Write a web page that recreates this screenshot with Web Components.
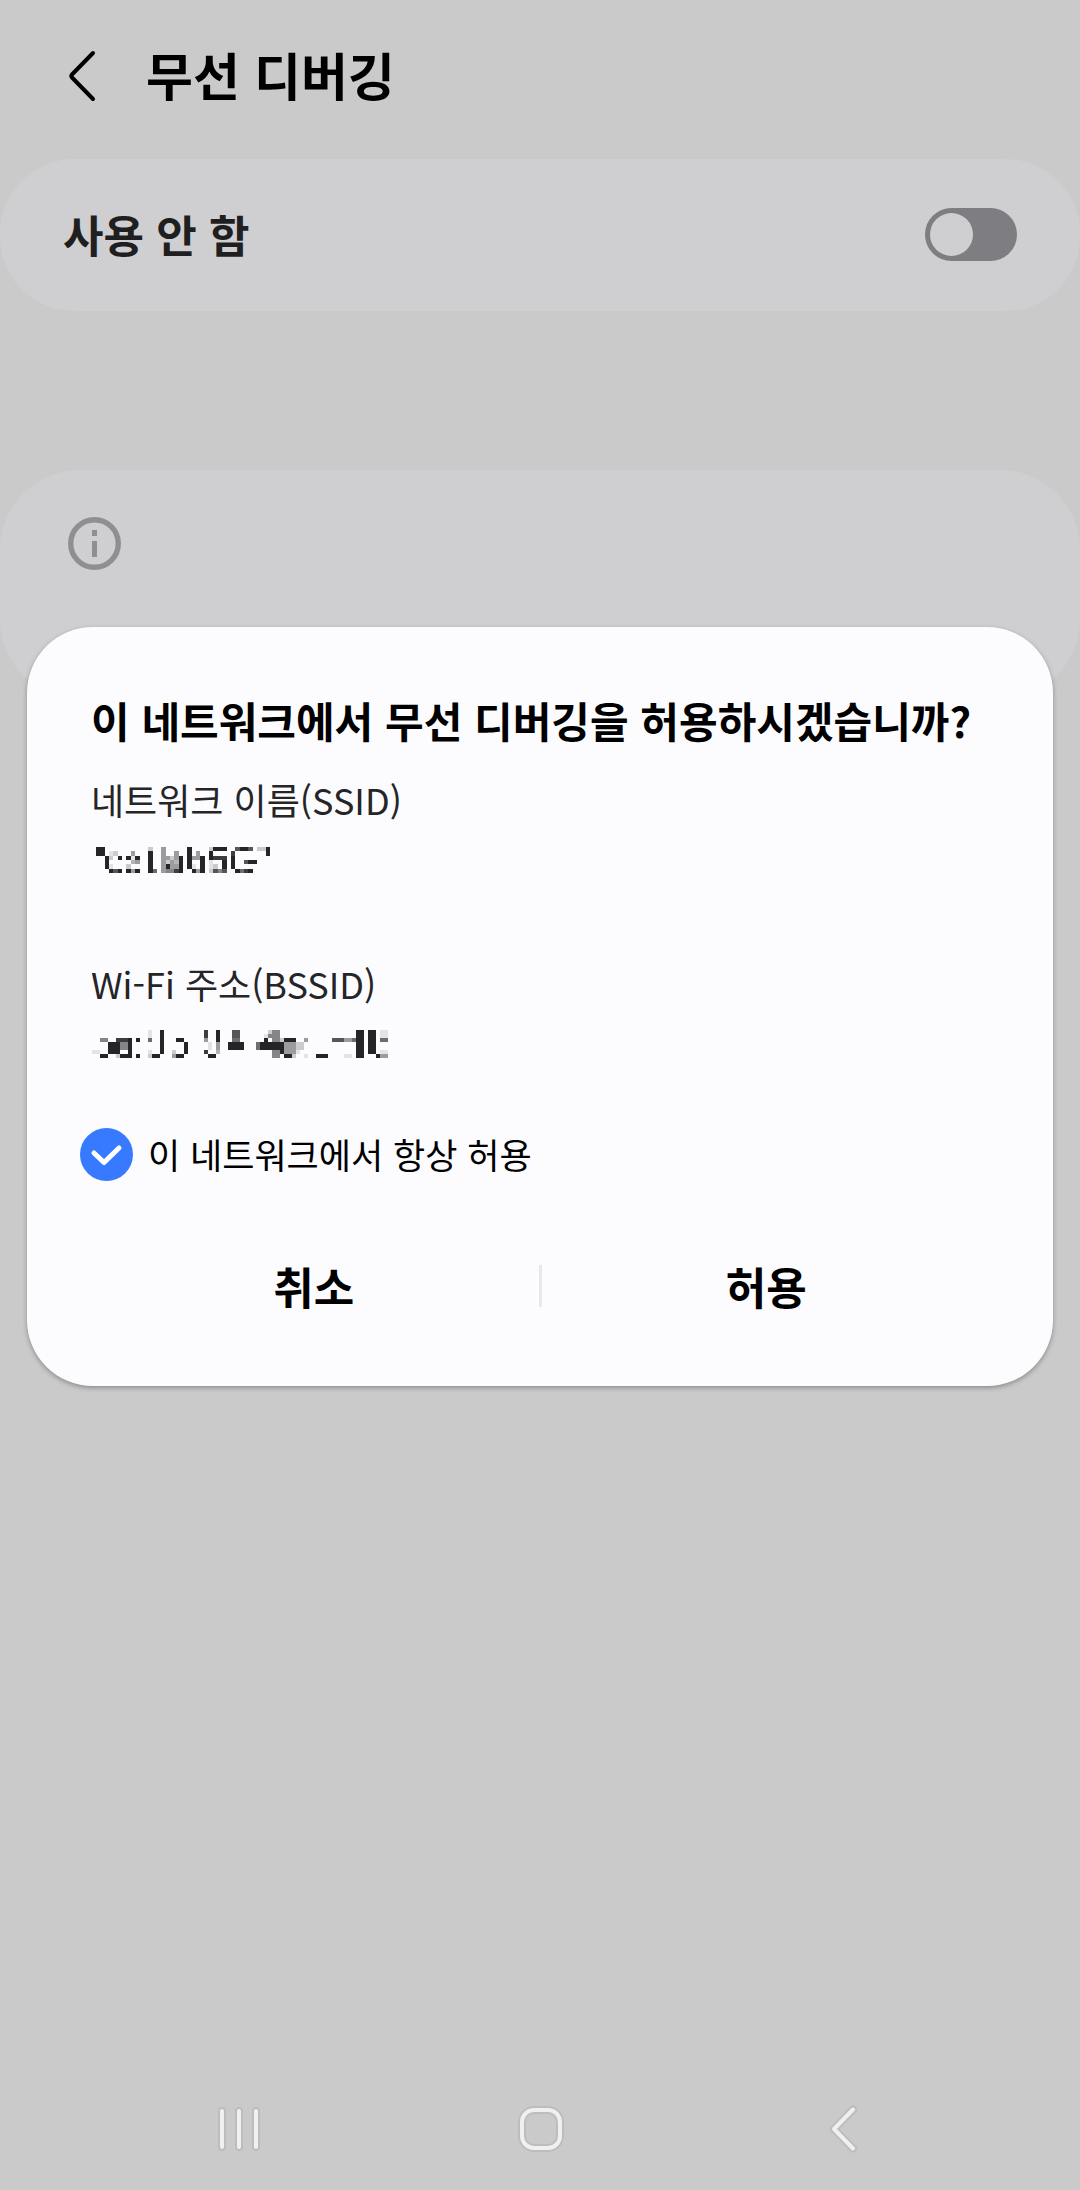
<!DOCTYPE html>
<html lang="ko">
<head>
<meta charset="utf-8">
<meta name="viewport" content="width=device-width, initial-scale=1">
<title>무선 디버깅</title>
<style>
  html, body { margin: 0; }
  body {
    background: #cacaca;
    color: #000;
    font-family: "Noto Sans CJK KR", "Noto Sans", sans-serif;
  }
</style>
</head>
<body>
<settings-screen>
  <app-bar slot="bar">무선 디버깅</app-bar>
  <switch-card>사용 안 함</switch-card>
  <info-card></info-card>
  <confirm-dialog slot="dialog">
    <span slot="title">이 네트워크에서 무선 디버깅을 허용하시겠습니까?</span>
    <info-field>네트워크 이름(SSID)<pixel-mask slot="value" name="ssid"></pixel-mask></info-field>
    <info-field>Wi-Fi 주소(BSSID)<pixel-mask slot="value" name="bssid"></pixel-mask></info-field>
    <check-option slot="option">이 네트워크에서 항상 허용</check-option>
    <span slot="cancel">취소</span>
    <span slot="accept">허용</span>
  </confirm-dialog>
  <nav-bar slot="nav"></nav-bar>
</settings-screen>

<script>
const define = (name, html, setup) => {
  const template = document.createElement('template');
  template.innerHTML = html;
  customElements.define(name, class extends HTMLElement {
    constructor() {
      super();
      this.attachShadow({ mode: 'open' }).append(template.content.cloneNode(true));
    }
    connectedCallback() { if (setup) setup(this, this.shadowRoot); }
  });
};

define('settings-screen', `
<style>
  :host { display: flex; flex-direction: column; min-height: 100vh; position: relative; }
  main { display: flex; flex-direction: column; gap: 159px; flex: 1; }
  .layer { position: absolute; inset: 0; padding: 627px 27px 0; }
</style>
<slot name="bar"></slot>
<main><slot></slot></main>
<slot name="nav"></slot>
<div class="layer"><slot name="dialog"></slot></div>`);

define('app-bar', `
<style>
  :host { display: flex; align-items: center; height: 159px; padding: 0 64px 8px; box-sizing: border-box; }
  button { all: unset; display: flex; width: 82px; height: 64px; align-items: center; }
  h1 { margin: 0; padding-bottom: 4px; font-size: 51px; line-height: 72px; font-weight: 700; }
</style>
<button aria-label="뒤로"><svg width="36" height="56" viewBox="0 0 36 56" fill="none" stroke="#000" stroke-width="4" stroke-linecap="round" stroke-linejoin="round"><path d="M29 5 8 26.500Q6.500 28 8 29.500L29 51"/></svg></button>
<h1><slot></slot></h1>`);

define('switch-card', `
<style>
  :host { display: block; }
  label { display: flex; align-items: center; justify-content: space-between; height: 152px; padding: 0 63px 2px; box-sizing: border-box; border-radius: 74px; background: #cfcfd1; color: #1f1f21; font-size: 44px; line-height: 64px; font-weight: 700; }
  input { appearance: none; margin: 0; width: 92px; height: 53px; padding: 5px; box-sizing: border-box; border-radius: 27px; background: #7e7d81; display: flex; }
  input::before { content: ""; width: 43px; height: 43px; border-radius: 50%; background: #cfcfd1; }
  input:checked { justify-content: flex-end; }
</style>
<label><slot></slot><input type="checkbox" role="switch"></label>`);

define('info-card', `
<style>
  :host { display: block; height: 229px; box-sizing: border-box; padding: 46px 67px; border-radius: 80px; background: #cfcfd1; }
  svg { display: block; }
</style>
<svg width="55" height="55" viewBox="0 0 55 55" role="img" aria-label="정보"><circle cx="27.500" cy="27.500" r="23.800" fill="none" stroke="#8f8f92" stroke-width="5.400"/><path d="M25 14h5v6h-5zM25 25h5v16h-5z" fill="#8f8f92"/></svg>`);

define('confirm-dialog', `
<style>
  :host { display: block; }
  section { display: flex; flex-direction: column; padding: 61px 62px 60px; border-radius: 66px; background: #fcfcff; box-shadow: 0 2px 5px rgba(0,0,0,.3); }
  h2 { margin: 0 2px 17px; font-size: 42px; line-height: 64px; font-weight: 700; }
  .fields { display: flex; flex-direction: column; gap: 63px; margin: 0 2px 53px; }
  footer { display: flex; align-items: center; margin-top: 65px; }
  button { all: unset; flex: 1; text-align: center; font-size: 44px; line-height: 80px; font-weight: 700; }
  i { width: 3px; height: 42px; background: #e8e8eb; }
</style>
<section role="dialog" aria-modal="true" aria-labelledby="t">
  <h2 id="t"><slot name="title"></slot></h2>
  <div class="fields"><slot></slot></div>
  <slot name="option"></slot>
  <footer><button><slot name="cancel"></slot></button><i></i><button><slot name="accept"></slot></button></footer>
</section>`);

define('info-field', `
<style>
  :host { display: flex; flex-direction: column; height: 121px; color: #252528; font-size: 36px; line-height: 60px; }
  .value { display: flex; height: 61px; align-items: center; }
</style>
<div><slot></slot></div>
<div class="value"><slot name="value"></slot></div>`);

define('check-option', `
<style>
  :host { display: flex; margin-left: -9px; }
  label { display: flex; align-items: center; gap: 15px; font-size: 35px; line-height: 54px; }
  .box { display: grid; }
  .box > * { grid-area: 1 / 1; }
  input { appearance: none; margin: 0; width: 53px; height: 53px; border-radius: 50%; background: #c4c4c8; }
  input:checked { background: #387aff; }
  svg { pointer-events: none; }
</style>
<label><span class="box"><input type="checkbox" checked><svg width="53" height="53" viewBox="0 0 53 53" fill="none" stroke="#fff" stroke-width="5" stroke-linecap="round" stroke-linejoin="round"><path d="M14 25 24 34.500 39 20"/></svg></span><slot></slot></label>`);

define('nav-bar', `
<style>
  :host { display: block; }
  nav { display: flex; height: 122px; padding: 0 88px; }
  button { all: unset; flex: 1; display: flex; justify-content: center; align-items: center; }
  svg { fill: none; stroke-linecap: round; stroke-linejoin: round; }
  .edge { stroke: #bdbdbd; stroke-width: 8px; }
  .line { stroke: #f0f0f0; stroke-width: 4px; }
</style>
<nav>
  <button aria-label="최근 앱"><svg width="56" height="56" viewBox="0 0 56 56"><path class="edge" d="M11 10V46M28 10V46M45 10V46"/><path class="line" d="M11 10V46M28 10V46M45 10V46"/></svg></button>
  <button aria-label="홈"><svg width="56" height="56" viewBox="0 0 56 56"><rect class="edge" x="10" y="9" width="38" height="38" rx="12"/><rect class="line" x="10" y="9" width="38" height="38" rx="12"/></svg></button>
  <button aria-label="뒤로"><svg width="56" height="56" viewBox="0 0 56 56"><path class="edge" d="M40 8.500 21 28 40 47.500"/><path class="line" d="M40 8.500 21 28 40 47.500"/></svg></button>
</nav>`);

/* Each run is [first column, shades]; a shade goes from 0 (clear) to 9 (ink). */
const masks = {
  ssid: { cols: 40, width: 174, height: 26, inset: 5, rows: [
    [[0,'99'],[12,'2'],[15,'4'],[21,'9'],[26,'2999'],[32,'7997'],[37,'229']],
    [[0,'99'],[3,'12'],[8,'4'],[12,'9'],[15,'4'],[18,'4'],[21,'9'],[23,'4'],[26,'9'],[31,'8'],[39,'9']],
    [[2,'92'],[5,'9'],[7,'919'],[12,'9'],[15,'44249'],[21,'9449'],[26,'9888'],[31,'9']],
    [[2,'9'],[8,'34'],[12,'9'],[15,'42439'],[21,'9'],[24,'9'],[26,'1'],[29,'9'],[31,'9'],[34,'799']],
    [[2,'91'],[7,'2'],[12,'9'],[15,'49449'],[21,'91'],[24,'9'],[26,'12'],[29,'9'],[31,'9']],
    [[3,'979'],[7,'949'],[12,'96'],[15,'45589'],[22,'949'],[26,'2757'],[32,'9689']]
  ]},
  bssid: { cols: 74, width: 296, height: 28, inset: 1, rows: [
    [[14,'1'],[17,'9'],[28,'8'],[31,'9'],[35,'77'],[44,'255'],[66,'99'],[69,'99'],[72,'11']],
    [[14,'1'],[17,'9'],[28,'8'],[31,'9'],[35,'77'],[43,'1555'],[66,'99'],[69,'99'],[72,'11']],
    [[2,'55'],[6,'8889'],[11,'9'],[14,'6'],[17,'9'],[21,'99'],[28,'4'],[31,'9'],[35,'66'],[43,'90552999'],[53,'4'],[60,'77744699'],[69,'99'],[72,'66']],
    [[4,'999559'],[17,'9'],[23,'9'],[29,'1'],[31,'4'],[34,'9999'],[41,'699999944422'],[66,'99'],[69,'99']],
    [[4,'999559'],[17,'9'],[23,'9'],[29,'1'],[31,'4'],[34,'9999'],[41,'699999944422'],[66,'99'],[69,'99']],
    [[0,'11'],[4,'999009'],[14,'1'],[17,'9'],[20,'2'],[23,'9'],[28,'8'],[31,'3'],[45,'5594441'],[66,'99'],[69,'99'],[72,'11']],
    [[2,'99'],[6,'2999'],[11,'9'],[14,'299'],[20,'499'],[29,'99'],[45,'55'],[48,'992'],[53,'1'],[56,'999'],[63,'11'],[66,'99'],[71,'944']]
  ]}
};

define('pixel-mask', `
<style>
  :host { display: block; }
  svg { display: block; fill: #252528; }
</style>
<svg preserveAspectRatio="none" shape-rendering="crispEdges" aria-hidden="true"></svg>`, (host, root) => {
  const mask = masks[host.getAttribute('name')];
  const svg = root.querySelector('svg');
  svg.setAttribute('width', mask.width);
  svg.setAttribute('height', mask.height);
  svg.setAttribute('viewBox', `0 0 ${mask.cols} ${mask.rows.length}`);
  svg.style.marginLeft = mask.inset + 'px';
  svg.innerHTML = mask.rows.map((runs, y) => runs.map(([x, shades]) =>
    [...shades].map((s, i) => s === '0' ? '' :
      `<rect x="${x + i}" y="${y}" width="1" height="1" opacity="${s === '9' ? 1 : s / 9}"/>`).join('')
  ).join('')).join('');
});
</script>
</body>
</html>
